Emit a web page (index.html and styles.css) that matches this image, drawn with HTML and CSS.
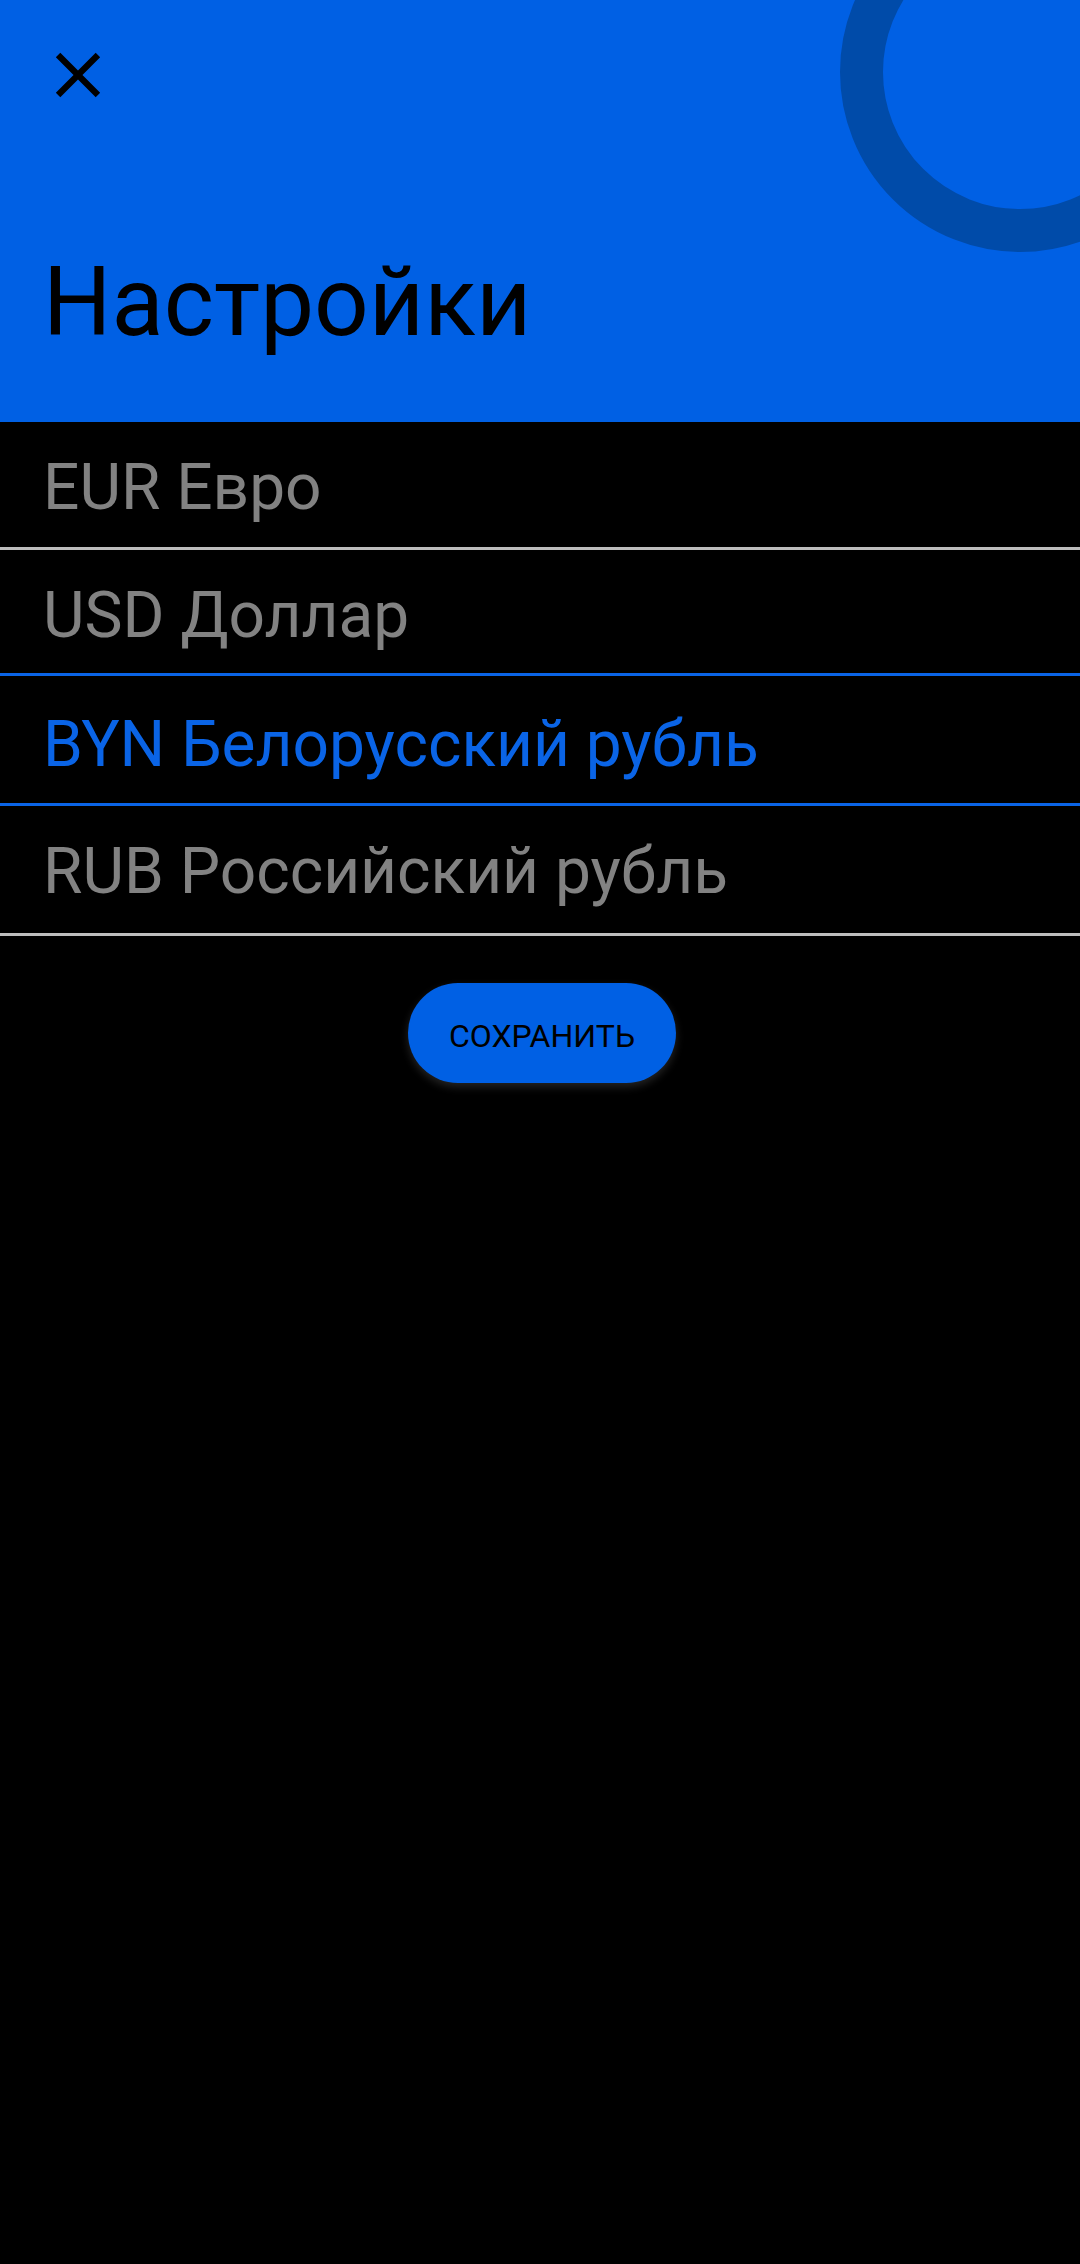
FILE: index.html
```html
<!DOCTYPE html>
<html lang="ru">
<head>
<meta charset="utf-8">
<title>Настройки</title>
<link rel="stylesheet" href="styles.css">
</head>
<body>
<div class="screen">
  <header class="header">
    <div class="ring"></div>
    <button class="close" aria-label="Закрыть">
      <svg viewBox="0 0 24 24" width="76" height="76"><path d="M19 6.41L17.59 5 12 10.59 6.41 5 5 6.41 10.59 12 5 17.59 6.41 19 12 13.41 17.59 19 19 17.59 13.41 12z" fill="#000"/></svg>
    </button>
    <h1 class="title">Настройки</h1>
  </header>
  <ul class="list">
    <li class="row row-first">EUR Евро</li>
    <li class="row row-second">USD Доллар</li>
    <li class="row row-selected">BYN Белорусский рубль</li>
    <li class="row">RUB Российский рубль</li>
  </ul>
  <div class="actions">
    <button class="save">СОХРАНИТЬ</button>
  </div>
</div>
</body>
</html>
```
FILE: styles.css
```css
html, body {
  margin: 0;
  padding: 0;
  background: #000;
}
body {
  font-family: Roboto, "Noto Sans", "Liberation Sans", sans-serif;
}
.screen {
  width: 1080px;
  height: 2264px;
  background: #000;
  overflow: hidden;
}
.header {
  position: relative;
  height: 422px;
  box-sizing: border-box;
  background: #0060e4;
  overflow: hidden;
  display: flex;
  flex-direction: column;
  align-items: flex-start;
  padding: 37px 0 0 40px;
}
.ring {
  position: absolute;
  left: 840px;
  top: -108px;
  width: 360px;
  height: 360px;
  box-sizing: border-box;
  border: 43px solid #004ba9;
  border-radius: 50%;
}
.close {
  position: relative;
  width: 76px;
  height: 76px;
  padding: 0;
  border: 0;
  background: transparent;
  display: block;
}
.close svg {
  display: block;
}
.title {
  position: relative;
  margin: 133px 0 0 3px;
  font-size: 96px;
  line-height: 112px;
  font-weight: 400;
  color: #000;
  letter-spacing: 0;
}
.list {
  list-style: none;
  margin: 0;
  padding: 0;
}
.row {
  box-sizing: border-box;
  height: 130px;
  padding: 30px 0 0 43px;
  font-size: 64px;
  line-height: 72px;
  color: #828282;
  border-bottom: 3px solid #bdbdbd;
}
.row-first {
  height: 128px;
}
.row-second {
  height: 126px;
}
.row-selected {
  color: #0a64e6;
  border-bottom-color: #0a64e6;
  border-top: 3px solid #0a64e6;
  margin-top: -3px;
  height: 133px;
  padding-top: 33px;
}
.actions {
  display: flex;
  justify-content: center;
  padding: 47px 0 0 4px;
}
.save {
  width: 268px;
  height: 100px;
  border: 0;
  border-radius: 50px;
  background: #0060e4;
  color: #000;
  font-family: Roboto, "Noto Sans", sans-serif;
  font-size: 32px;
  font-weight: 400;
  letter-spacing: 0;
  box-shadow: 0 4px 8px rgba(80, 80, 80, 0.45);
  padding: 5px 0 0 0;
}
```
